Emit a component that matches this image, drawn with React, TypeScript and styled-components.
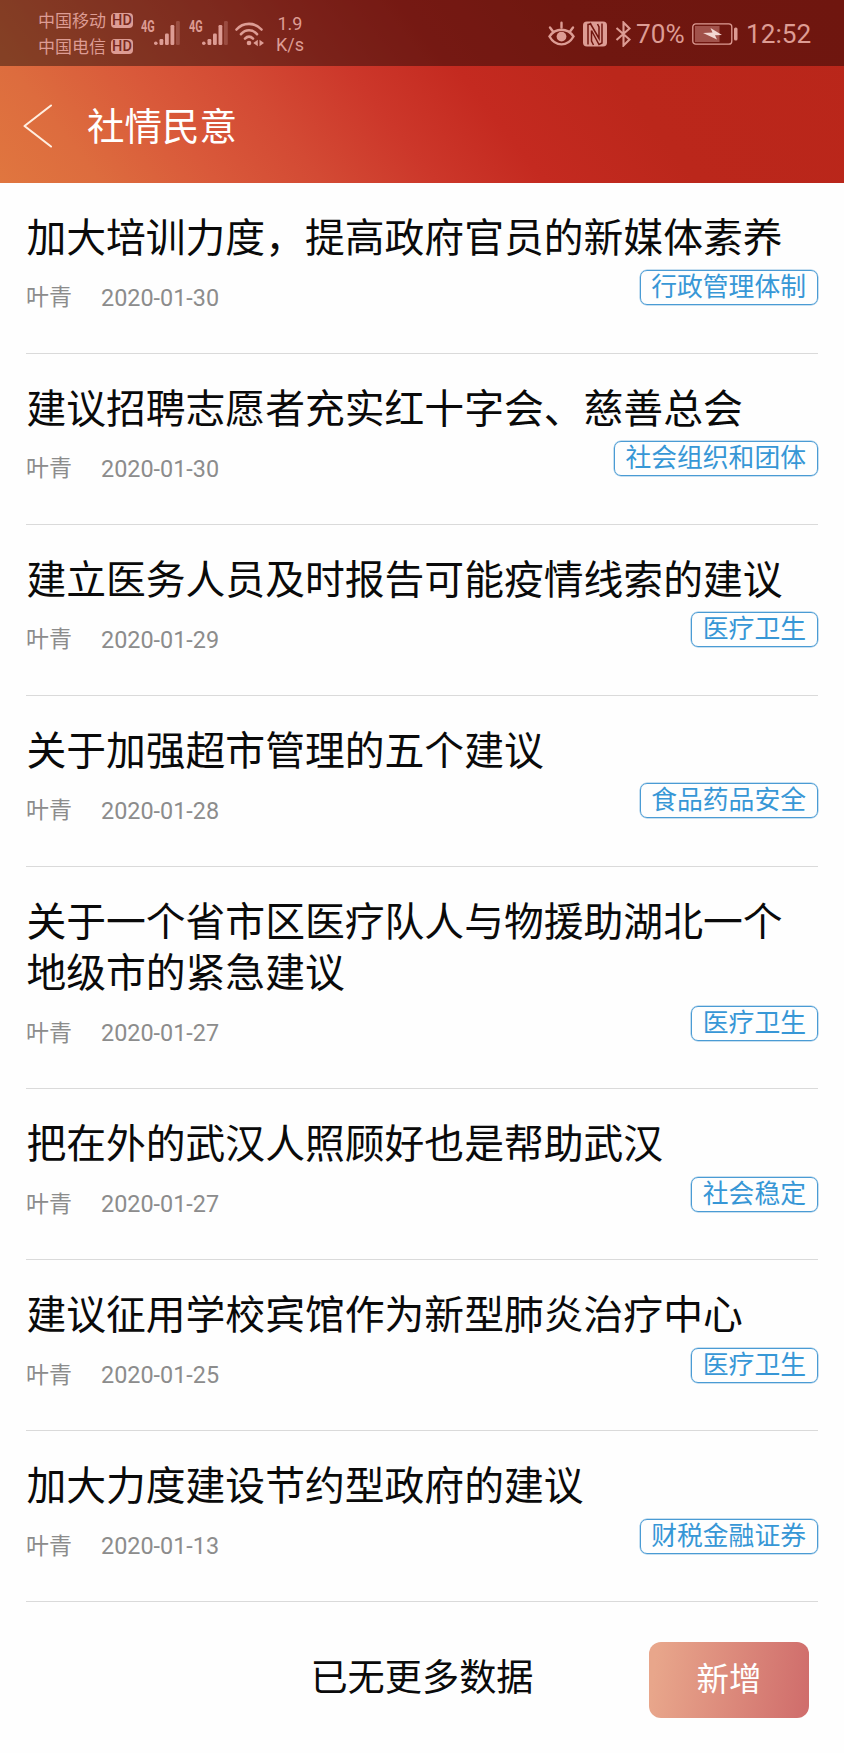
import React from "react";
import styled, { createGlobalStyle } from "styled-components";

const GlobalStyle = createGlobalStyle`
  * { box-sizing: border-box; }
  body {
    margin: 0;
    background: #fefefe;
    font-family: Roboto, "Noto Sans CJK SC", sans-serif;
  }
`;

const Screen = styled.div`
  width: 844px;
  height: 1753px;
  overflow: hidden;
  display: flex;
  flex-direction: column;
  background: #fefefe;
`;

const Masthead = styled.header`
  height: 182.6px;
  flex: none;
  background: linear-gradient(52deg, #e0763f 0, #dd6c3e 80px, #d9593a 172px, #d34a34 255px, #cc372a 345px, #c42a20 430px, #bb271b 550px, #b9261a 100%);
`;

const StatusBar = styled.div`
  height: 66px;
  display: flex;
  justify-content: space-between;
  padding: 0 33px 0 38px;
  background: rgba(0, 0, 0, 0.4);
  color: #dd9c94;
`;

const StatusGroup = styled.div`
  display: flex;
  align-items: center;
  padding-top: 1px;
`;

const Gap = styled.span<{ $w: number }>`
  margin-left: ${(p) => p.$w}px;
`;

const Carriers = styled.div`
  display: flex;
  flex-direction: column;
  width: 95px;
`;

const Carrier = styled.div`
  height: 26px;
  display: flex;
  align-items: center;
  gap: 5px;
  font-size: 17px;
  line-height: 26px;
  white-space: nowrap;
`;

const HdBadge = styled.span`
  width: 22px;
  height: 15px;
  border-radius: 4px;
  background: #dd9c94;
  color: #79281d;
  font-size: 14.5px;
  font-weight: 500;
  line-height: 15px;
  text-align: center;
`;

const Signal = styled.div`
  display: flex;
  width: 48px;
  height: 26px;
  margin-top: -2px;
`;

const SignalLabel = styled.span`
  width: 13px;
  font-size: 16px;
  font-weight: 700;
  line-height: 13px;
  transform: scaleX(0.68);
  transform-origin: left;
`;

const Speed = styled.div`
  width: 30px;
  margin-left: 10px;
  font-size: 18px;
  line-height: 21px;
  text-align: center;
`;

const StatusText = styled.span<{ $width: number }>`
  width: ${(p) => p.$width}px;
  font-size: 26.2px;
  line-height: 30px;
  white-space: nowrap;
`;

const TitleBar = styled.div`
  height: 116.6px;
  display: flex;
  align-items: center;
  padding: 3px 0 0 23px;
  color: #fff;
`;

const PageTitle = styled.h1`
  margin: 3px 0 0 34px;
  font-size: 37.5px;
  font-weight: 400;
  line-height: 54px;
`;

const List = styled.ul`
  margin: 0;
  padding: 0 26px;
  list-style: none;
`;

const Item = styled.li`
  padding: 30px 0 38.5px;
  border-bottom: 1px solid #dadada;
`;

const ItemTitle = styled.h2`
  margin: 0;
  padding-left: 0.4px;
  font-size: 39.8px;
  font-weight: 400;
  line-height: 51.5px;
  color: #0a0a0a;
`;

const Meta = styled.div`
  display: flex;
  align-items: flex-start;
  height: 50px;
  color: #8c8c8c;
`;

const Author = styled.span`
  width: 75px;
  padding-top: 17.2px;
  font-size: 23px;
  line-height: 34px;
`;

const PostDate = styled.time`
  flex: 1;
  padding-top: 16.8px;
  font-size: 23.4px;
  line-height: 34px;
`;

const Tag = styled.span`
  height: 35px;
  margin-top: 6px;
  padding: 0 11px 0 10.5px;
  border: 1px solid #4a9bd4;
  border-radius: 7px;
  box-shadow: 0 0 0 0.5px #4a9bd499;
  color: #3797d6;
  font-size: 25.8px;
  line-height: 32px;
`;

const Footer = styled.footer`
  flex: 1;
  display: grid;
  grid-template-columns: 1fr auto 1fr;
  align-items: start;
  padding: 40.3px 35px 0;
`;

const EndText = styled.p`
  grid-column: 2;
  margin: 8.5px 0 0;
  font-size: 37.2px;
  line-height: 54px;
  color: #0a0a0a;
`;

const AddButton = styled.button`
  justify-self: end;
  width: 160px;
  height: 75.5px;
  padding: 0 0 8px;
  border: 0;
  border-radius: 12px;
  background: linear-gradient(97deg, #e8a68b 5%, #d06e6c 97%);
  color: #fff;
  font-family: inherit;
  font-size: 32.5px;
`;

const items = [
  { title: "加大培训力度，提高政府官员的新媒体素养", date: "2020-01-30", tag: "行政管理体制" },
  { title: "建议招聘志愿者充实红十字会、慈善总会", date: "2020-01-30", tag: "社会组织和团体" },
  { title: "建立医务人员及时报告可能疫情线索的建议", date: "2020-01-29", tag: "医疗卫生" },
  { title: "关于加强超市管理的五个建议", date: "2020-01-28", tag: "食品药品安全" },
  { title: "关于一个省市区医疗队人与物援助湖北一个地级市的紧急建议", date: "2020-01-27", tag: "医疗卫生" },
  { title: "把在外的武汉人照顾好也是帮助武汉", date: "2020-01-27", tag: "社会稳定" },
  { title: "建议征用学校宾馆作为新型肺炎治疗中心", date: "2020-01-25", tag: "医疗卫生" },
  { title: "加大力度建设节约型政府的建议", date: "2020-01-13", tag: "财税金融证券" },
];

const SignalBars = () => (
  <Signal>
    <SignalLabel>4G</SignalLabel>
    <svg width="26" height="26" viewBox="0 0 26 26" fill="currentColor">
      <circle cx="1.8" cy="23.2" r="1.8" />
      <rect x="5.5" y="19" width="3.8" height="6" rx="1.2" />
      <rect x="11" y="13.5" width="3.8" height="11.5" rx="1.2" />
      <rect x="16.5" y="5" width="3.8" height="20" rx="1.2" />
      <rect x="22" y="1" width="3.8" height="24" rx="1.2" opacity="0.3" />
    </svg>
  </Signal>
);

const WifiIcon = () => (
  <svg width="30" height="26" viewBox="0 0 30 26" fill="none" stroke="currentColor" strokeWidth="2.6" strokeLinecap="round">
    <path d="M1.5 8.5C8 1 20 1 26.5 8.5M6 13.2C10.5 8 17.5 8 22 13.2M10 17.6C12.5 15 15.5 15 18 17.6" />
    <circle cx="14" cy="22" r="2.3" fill="currentColor" stroke="none" />
    <path d="M18.3 22l4.500-3.200v6.400zM29 22l-4.500-3.200v6.400z" fill="currentColor" stroke="none" />
  </svg>
);

const EyeIcon = () => (
  <svg width="27" height="26" viewBox="0 0 27 26" fill="none" stroke="currentColor" strokeWidth="2.4" strokeLinecap="round">
    <path d="M1.5 15.5C7.5 6.5 19.5 6.5 25.5 15.5C19.5 26 7.5 26 1.5 15.5Z" />
    <path d="M13.5 1.800v4.700M2 6.500l3 4M25 6.500l-3 4" />
    <circle cx="13.5" cy="15.600" r="4.900" fill="currentColor" stroke="none" />
  </svg>
);

const NfcIcon = () => (
  <svg width="24" height="26" viewBox="0 0 24 26">
    <rect x="0" y="0.5" width="24" height="25" rx="4" fill="currentColor" />
    <path d="M5 23.5V3.5L8.500 3M8.500 9.500V20L10.500 24M7 2L16 17.500V6L14.500 3M19 2.500V22L16 23.500L8.500 9.500" fill="none" stroke="#70150e" strokeWidth="1.500" />
  </svg>
);

const BluetoothIcon = () => (
  <svg width="17" height="26" viewBox="0 0 17 26" fill="none" stroke="currentColor" strokeWidth="2.1">
    <path d="M1.5 7L14.5 18.5L8.5 24.5V1.5L14.5 7.5L1.5 19" />
  </svg>
);

const BatteryIcon = () => (
  <svg width="46" height="22" viewBox="0 0 46 22" fill="none">
    <rect x="0.8" y="0.8" width="39" height="20.4" rx="3" stroke="currentColor" strokeWidth="1.3" />
    <rect x="3" y="3" width="24.5" height="16" fill="currentColor" opacity="0.45" />
    <rect x="42" y="4.5" width="3.5" height="13" rx="1.5" fill="currentColor" />
    <path d="M11 10l9.500-.5-2-4.500L30 12l-7 .3 2 4.200z" fill="#f3d8d4" />
  </svg>
);

const BackIcon = () => (
  <svg width="30" height="44" viewBox="0 0 30 44" fill="none" stroke="#ffeee0" strokeWidth="2.1" strokeLinecap="round" strokeLinejoin="round">
    <path d="M28 1.5L1.5 22L28 42.5" />
  </svg>
);

export default function App() {
  return (
    <>
      <GlobalStyle />
      <Screen>
        <Masthead>
          <StatusBar>
            <StatusGroup>
              <Carriers>
                <Carrier>中国移动<HdBadge>HD</HdBadge></Carrier>
                <Carrier>中国电信<HdBadge>HD</HdBadge></Carrier>
              </Carriers>
              <Gap $w={8} />
              <SignalBars />
              <SignalBars />
              <Gap $w={-2} />
              <WifiIcon />
              <Speed>1.9<br />K/s</Speed>
            </StatusGroup>
            <StatusGroup>
              <EyeIcon />
              <Gap $w={8} />
              <NfcIcon />
              <Gap $w={8} />
              <BluetoothIcon />
              <Gap $w={4} />
              <StatusText $width={56}>70%</StatusText>
              <BatteryIcon />
              <Gap $w={8} />
              <StatusText $width={65}>12:52</StatusText>
            </StatusGroup>
          </StatusBar>
          <TitleBar>
            <BackIcon />
            <PageTitle>社情民意</PageTitle>
          </TitleBar>
        </Masthead>
        <List>
          {items.map((item) => (
            <Item key={item.title}>
              <ItemTitle>{item.title}</ItemTitle>
              <Meta>
                <Author>叶青</Author>
                <PostDate>{item.date}</PostDate>
                <Tag>{item.tag}</Tag>
              </Meta>
            </Item>
          ))}
        </List>
        <Footer>
          <EndText>已无更多数据</EndText>
          <AddButton>新增</AddButton>
        </Footer>
      </Screen>
    </>
  );
}
